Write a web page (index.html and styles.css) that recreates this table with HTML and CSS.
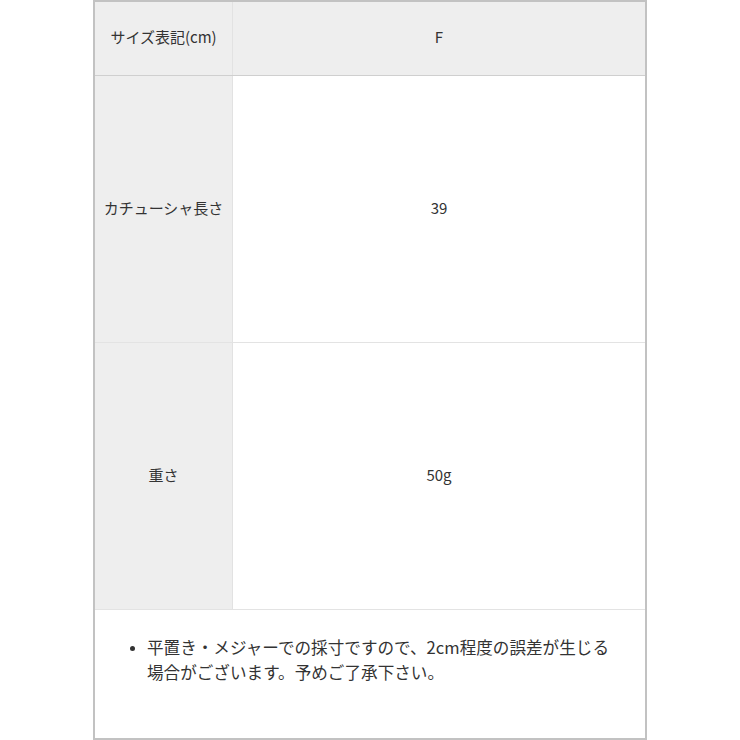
FILE: index.html
```html
<!DOCTYPE html>
<html lang="ja">
<head>
<meta charset="utf-8">
<link rel="stylesheet" href="styles.css">
</head>
<body>
<div class="sheet">
  <div class="spec">
    <div class="row head">
      <div class="label">サイズ表記(cm)</div>
      <div class="value">F</div>
    </div>
    <div class="row tall">
      <div class="label">カチューシャ長さ</div>
      <div class="value">39</div>
    </div>
    <div class="row tall last">
      <div class="label">重さ</div>
      <div class="value">50g</div>
    </div>
  </div>
  <div class="note">
    <ul>
      <li>平置き・メジャーでの採寸ですので、2cm程度の誤差が生じる場合がございます。予めご了承下さい。</li>
    </ul>
  </div>
</div>
</body>
</html>
```
FILE: styles.css
```css
html, body {
  margin: 0;
  padding: 0;
  background: #fff;
}
body {
  font-family: "Noto Sans CJK JP", "Noto Sans", sans-serif;
  color: #333;
}
.sheet {
  box-sizing: border-box;
  width: 554px;
  height: 740px;
  margin-left: 93px;
  border: 2px solid #c2c2c2;
  display: flex;
  flex-direction: column;
}
.spec {
  display: flex;
  flex-direction: column;
}
.row {
  display: grid;
  grid-template-columns: 138px 1fr;
  border-bottom: 1px solid #e3e3e3;
  font-size: 15px;
}
.row.head {
  height: 73px;
  background: #eeeeee;
  border-bottom: 1px solid #cfcfcf;
}
.row.tall {
  height: 266px;
}
.label,
.value {
  display: flex;
  align-items: center;
  justify-content: center;
  padding-bottom: 4px;
}
.label {
  background: #eeeeee;
  border-right: 1px solid #e2e2e2;
}
.note {
  flex: 1;
  padding: 25px 30px 0 0;
}
.note ul {
  margin: 0;
  padding-left: 52px;
  font-size: 16.6px;
  line-height: 25px;
}
.note li::marker {
  font-size: 13px;
}
```
